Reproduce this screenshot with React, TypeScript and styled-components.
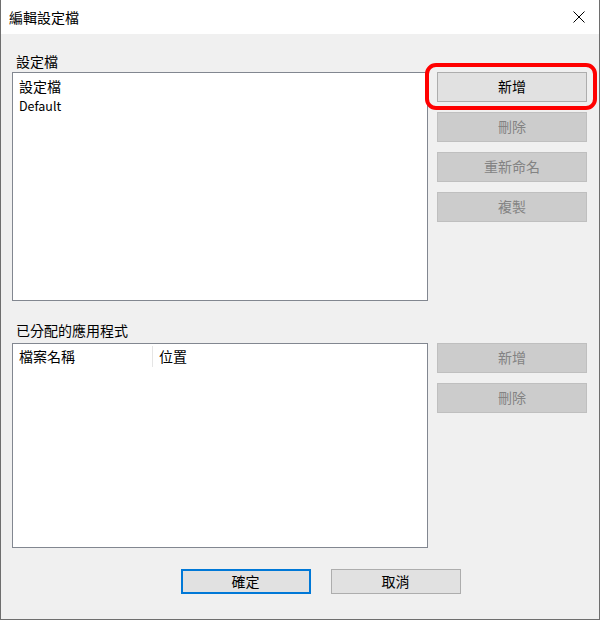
import React from "react";
import styled, { createGlobalStyle, css } from "styled-components";

const GlobalStyle = createGlobalStyle`
  html, body {
    margin: 0;
    padding: 0;
    background: #ffffff;
  }
  body {
    font-family: "Noto Sans CJK TC", "Noto Sans", sans-serif;
    color: #000000;
  }
`;

const Window = styled.div`
  box-sizing: border-box;
  width: 600px;
  height: 620px;
  display: flex;
  flex-direction: column;
  background: #f0f0f0;
  border: 1px solid #6e6e6e;
  border-top: none;
`;

const TitleBar = styled.div`
  height: 34px;
  flex: none;
  display: flex;
  align-items: center;
  justify-content: space-between;
  padding: 0 13px 0 8px;
  background: #ffffff;
`;

const Title = styled.span`
  font-size: 14px;
  line-height: 20px;
`;

const CloseButton = styled.button`
  width: 14px;
  height: 14px;
  padding: 0;
  border: none;
  background: transparent;
  display: flex;
  align-items: center;
  justify-content: center;
`;

const Body = styled.div`
  flex: 1;
  display: flex;
  flex-direction: column;
  padding: 17px 12px 0 11px;
`;

const SectionLabel = styled.div<{ $gap: number; $top?: number }>`
  font-size: 14px;
  line-height: 20px;
  padding-left: 4px;
  margin-top: ${({ $top }) => $top ?? 0}px;
  margin-bottom: ${({ $gap }) => $gap}px;
`;

const SectionRow = styled.div`
  display: grid;
  grid-template-columns: 416px 150px;
  column-gap: 9px;
  align-items: start;
`;

const ListBox = styled.div<{ $height: number; $flush?: boolean }>`
  box-sizing: border-box;
  height: ${({ $height }) => $height}px;
  background: #ffffff;
  border: 1px solid #828790;
  padding: ${({ $flush }) => ($flush ? "2px 0 0 0" : "3px 0 0 6px")};
`;

const ListItem = styled.div<{ $latin?: boolean }>`
  font-size: ${({ $latin }) => ($latin ? "12.5px" : "14px")};
  line-height: 20px;
`;

const HeaderRow = styled.div`
  display: flex;
`;

const HeaderCell = styled.div<{ $width?: number }>`
  box-sizing: border-box;
  width: ${({ $width }) => ($width ? `${$width}px` : "auto")};
  height: 21px;
  font-size: 14px;
  line-height: 21px;
  padding-left: 6px;
  border-right: ${({ $width }) => ($width ? "1px solid #e5e5e5" : "none")};
`;

const ButtonColumn = styled.div`
  display: flex;
  flex-direction: column;
  gap: 10px;
`;

const Highlight = styled.div`
  position: relative;

  &::after {
    content: "";
    position: absolute;
    top: -9px;
    left: -12px;
    right: -10px;
    bottom: -8px;
    border: 4px solid #ff0000;
    border-radius: 11px;
    pointer-events: none;
  }
`;

const Button = styled.button<{ $primary?: boolean; $width?: number; $height?: number }>`
  box-sizing: border-box;
  width: ${({ $width }) => ($width ? `${$width}px` : "100%")};
  height: ${({ $height }) => $height ?? 30}px;
  padding: 0 0 2px;
  margin: 0;
  font-family: inherit;
  font-size: 14px;
  color: #000000;
  background: #e1e1e1;
  border: 1px solid #adadad;
  display: flex;
  align-items: center;
  justify-content: center;

  &:disabled {
    background: #cccccc;
    border-color: #bfbfbf;
    color: #838383;
  }

  ${({ $primary }) =>
    $primary &&
    css`
      border: 2px solid #0078d7;
    `}
`;

const Footer = styled.div`
  display: flex;
  justify-content: center;
  gap: 20px;
  margin-top: 21px;
  padding-left: 42px;
`;

const CloseIcon = () => (
  <svg width="12" height="12" viewBox="0 0 12 12">
    <path d="M0.5 0.5 L11.5 11.5 M11.5 0.5 L0.5 11.5" stroke="#000" strokeWidth="1" fill="none" />
  </svg>
);

export default function App() {
  return (
    <>
      <GlobalStyle />
      <Window>
        <TitleBar>
          <Title>編輯設定檔</Title>
          <CloseButton aria-label="關閉">
            <CloseIcon />
          </CloseButton>
        </TitleBar>
        <Body>
          <SectionLabel $gap={1}>設定檔</SectionLabel>
          <SectionRow>
            <ListBox $height={229}>
              <ListItem>設定檔</ListItem>
              <ListItem $latin>Default</ListItem>
            </ListBox>
            <ButtonColumn>
              <Highlight>
                <Button>新增</Button>
              </Highlight>
              <Button disabled>刪除</Button>
              <Button disabled>重新命名</Button>
              <Button disabled>複製</Button>
            </ButtonColumn>
          </SectionRow>

          <SectionLabel $top={19} $gap={3}>
            已分配的應用程式
          </SectionLabel>
          <SectionRow>
            <ListBox $height={205} $flush>
              <HeaderRow>
                <HeaderCell $width={140}>檔案名稱</HeaderCell>
                <HeaderCell>位置</HeaderCell>
              </HeaderRow>
            </ListBox>
            <ButtonColumn>
              <Button disabled>新增</Button>
              <Button disabled>刪除</Button>
            </ButtonColumn>
          </SectionRow>

          <Footer>
            <Button $primary $width={130} $height={25}>
              確定
            </Button>
            <Button $width={130} $height={25}>
              取消
            </Button>
          </Footer>
        </Body>
      </Window>
    </>
  );
}
